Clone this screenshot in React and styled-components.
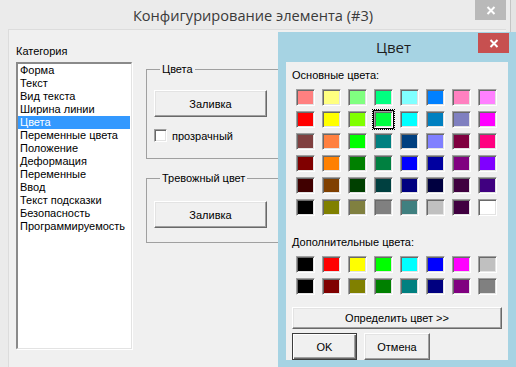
import React from 'react';
import styled, { createGlobalStyle } from 'styled-components';

const Global = createGlobalStyle`
  html, body { margin: 0; padding: 0; }
  body {
    width: 516px; height: 367px; overflow: hidden;
    background: #ebebeb;
    font-family: "Liberation Sans", Arial, sans-serif;
    font-size: 11px; color: #000;
  }
  * { box-sizing: border-box; }
`;

const Desktop = styled.div`
  position: relative;
  width: 516px;
  height: 367px;
  overflow: hidden;
  background: #e4e4e4;
`;

const MainWindow = styled.div`
  position: absolute;
  left: 0;
  top: 0;
  width: 511px;
  height: 380px;
  background: #ebebeb;
  border-right: 1px solid #c4c4c4;
  display: flex;
  flex-direction: column;
`;

const TitleBar = styled.div`
  height: ${p => p.$h}px;
  flex: none;
  display: grid;
  grid-template-columns: 1fr auto 1fr;
  align-items: start;
  padding-right: ${p => p.$pr}px;
`;

const TitleText = styled.div`
  grid-column: 2;
  align-self: center;
  font-family: "Open Sans", "Noto Sans", sans-serif;
  font-size: ${p => p.$size}px;
  color: ${p => p.$color};
  white-space: nowrap;
  margin-top: ${p => p.$mt || 0}px;
`;

const CloseBtn = styled.div`
  grid-column: 3;
  justify-self: end;
  width: 31px;
  height: 20px;
  background: ${p => p.$bg};
  display: flex;
  align-items: center;
  justify-content: center;
  margin-top: ${p => p.$mt || 0}px;
`;

const Panel = styled.div`
  flex: 1;
  margin: 0 4px 0 8px;
  background: #f0f0f0;
  border-top: 1px solid #dcdcdc;
  border-left: 1px solid #dcdcdc;
  display: flex;
  gap: 14px;
  padding: 15px 0 0 7px;
`;

const LeftCol = styled.div`
  width: 116px;
  display: flex;
  flex-direction: column;
`;

const Label = styled.div`
  height: 13px;
  line-height: 13px;
  white-space: nowrap;
  margin-bottom: ${p => p.$mb || 0}px;
  margin-top: ${p => p.$mt || 0}px;
`;

const ListBox = styled.div`
  width: 116px;
  height: 287px;
  background: #fff;
  border-top: 2px solid #8a8a8a;
  border-left: 2px solid #8a8a8a;
  border-right: 1px solid #e3e3e3;
  border-bottom: 1px solid #e3e3e3;
  box-shadow: 1px 1px 0 #fff;
  display: flex;
  flex-direction: column;
`;

const ListItem = styled.div`
  height: 13px;
  line-height: 13px;
  padding-left: 2px;
  margin-right: 1px;
  white-space: nowrap;
  background: ${p => (p.$sel ? '#3399ff' : 'transparent')};
  color: ${p => (p.$sel ? '#fff' : '#000')};
`;

const RightCol = styled.div`
  display: flex;
  flex-direction: column;
  gap: 13px;
  padding-top: 18px;
`;

const Group = styled.fieldset`
  margin: 0;
  width: 166px;
  border: 1px solid #a0a0a0;
  padding: 0 7px ${p => p.$pb}px 7px;
  display: flex;
  flex-direction: column;
  align-items: flex-start;
`;

const Legend = styled.legend`
  margin-left: 6px;
  padding: 0 2px;
  height: 13px;
  line-height: 13px;
  font-size: 11px;
`;

const Button = styled.div`
  width: ${p => p.$w}px;
  height: ${p => p.$h}px;
  margin-top: ${p => p.$mt || 0}px;
  background: #f0f0f0;
  border-top: 1px solid ${p => (p.$def ? '#3c3c3c' : '#fff')};
  border-left: 1px solid ${p => (p.$def ? '#3c3c3c' : '#fff')};
  border-right: 1px solid ${p => (p.$def ? '#3c3c3c' : '#696969')};
  border-bottom: 1px solid ${p => (p.$def ? '#3c3c3c' : '#696969')};
  box-shadow: ${p =>
    p.$def
      ? 'inset 1px 1px 0 #fff, inset -1px -1px 0 #696969, inset -2px -2px 0 #a0a0a0'
      : 'inset -1px -1px 0 #a0a0a0, inset 1px 1px 0 #e3e3e3'};
  display: flex;
  align-items: center;
  justify-content: center;
  white-space: nowrap;
  flex: none;
`;

const CheckRow = styled.div`
  margin-top: 12px;
  height: 13px;
  display: flex;
  align-items: center;
  gap: 5px;
`;

const CheckBox = styled.div`
  width: 13px;
  height: 13px;
  background: #fff;
  border-top: 1px solid #a0a0a0;
  border-left: 1px solid #a0a0a0;
  border-right: 1px solid #fff;
  border-bottom: 1px solid #fff;
  box-shadow: inset 1px 1px 0 #696969, inset -1px -1px 0 #e3e3e3;
`;

const Dialog = styled.div`
  position: absolute;
  left: 278px;
  top: 32px;
  width: 240px;
  height: 340px;
  background: #a6d3e3;
  display: flex;
  flex-direction: column;
`;

const Client = styled.div`
  margin: 0 10px 0 8px;
  height: 298px;
  background: #f0f0f0;
  overflow: hidden;
  padding: 7px 6px 0 6px;
  display: flex;
  flex-direction: column;
`;

const Grid = styled.div`
  display: grid;
  grid-template-columns: repeat(8, 19px);
  column-gap: 7px;
  row-gap: 5px;
  margin: ${p => p.$mt}px 0 0 4px;
`;

const Swatch = styled.div`
  width: 19px;
  height: 17px;
  background: ${p => p.$c};
  border-top: 1px solid #a0a0a0;
  border-left: 1px solid #a0a0a0;
  border-right: 1px solid #fff;
  border-bottom: 1px solid #fff;
  box-shadow: inset 1px 1px 0 #696969, inset -1px -1px 0 #e3e3e3
    ${p => (p.$sel ? ', 0 0 0 1px #000' : '')};
  outline: ${p => (p.$sel ? '1px dotted #000' : 'none')};
  outline-offset: 1px;
`;

const ButtonRow = styled.div`
  display: flex;
  gap: 7px;
  margin-top: 4px;
`;

const XIcon = ({ color = '#fff' }) => (
  <svg width="10" height="9" viewBox="0 0 10 9">
    <path d="M1.5 1 L8.5 8 M8.5 1 L1.5 8" stroke={color} strokeWidth="2" fill="none" />
  </svg>
);

const categories = [
  'Форма', 'Текст', 'Вид текста', 'Ширина линии', 'Цвета', 'Переменные цвета',
  'Положение', 'Деформация', 'Переменные', 'Ввод', 'Текст подсказки',
  'Безопасность', 'Программируемость',
];

const basic = [
  ['#FF8080', '#FFFF80', '#80FF80', '#00FF80', '#80FFFF', '#0080FF', '#FF80C0', '#FF80FF'],
  ['#FF0000', '#FFFF00', '#80FF00', '#00FF40', '#00FFFF', '#0080C0', '#8080C0', '#FF00FF'],
  ['#804040', '#FF8040', '#00FF00', '#008080', '#004080', '#8080FF', '#800040', '#FF0080'],
  ['#800000', '#FF8000', '#008000', '#008040', '#0000FF', '#0000A0', '#800080', '#8000FF'],
  ['#400000', '#804000', '#004000', '#004040', '#000080', '#000040', '#400040', '#400080'],
  ['#000000', '#808000', '#808040', '#808080', '#408080', '#C0C0C0', '#400040', '#FFFFFF'],
];

const custom = [
  ['#000000', '#FF0000', '#FFFF00', '#00FF00', '#00FFFF', '#0000FF', '#FF00FF', '#C0C0C0'],
  ['#000000', '#800000', '#808000', '#008000', '#008080', '#000080', '#800080', '#808080'],
];

export default function App() {
  return (
    <>
      <Global />
      <Desktop>
        <MainWindow>
          <TitleBar $h={29} $pr={4}>
            <TitleText $size={14.6} $color="#3a3a3a" $mt={1}>
              Конфигурирование элемента (#3)
            </TitleText>
            <CloseBtn $bg="#b9b9b9">
              <XIcon />
            </CloseBtn>
          </TitleBar>
          <Panel>
            <LeftCol>
              <Label $mb={4}>Категория</Label>
              <ListBox>
                {categories.map((c, i) => (
                  <ListItem key={c} $sel={i === 4}>{c}</ListItem>
                ))}
              </ListBox>
            </LeftCol>
            <RightCol>
              <Group $pb={16}>
                <Legend>Цвета</Legend>
                <Button $w={113} $h={27} $mt={14}>Заливка</Button>
                <CheckRow>
                  <CheckBox />
                  <span>прозрачный</span>
                </CheckRow>
              </Group>
              <Group $pb={14}>
                <Legend>Тревожный цвет</Legend>
                <Button $w={113} $h={27} $mt={16}>Заливка</Button>
              </Group>
            </RightCol>
          </Panel>
        </MainWindow>

        <Dialog>
          <TitleBar $h={30} $pr={9}>
            <TitleText $size={15} $color="#1e1e1e">Цвет</TitleText>
            <CloseBtn $bg="#c75050" $mt={1}>
              <XIcon />
            </CloseBtn>
          </TitleBar>
          <Client>
            <Label>Основные цвета:</Label>
            <Grid $mt={7}>
              {basic.flat().map((c, i) => (
                <Swatch key={i} $c={c} $sel={i === 11} />
              ))}
            </Grid>
            <Label $mt={20}>Дополнительные цвета:</Label>
            <Grid $mt={7}>
              {custom.flat().map((c, i) => (
                <Swatch key={i} $c={c} />
              ))}
            </Grid>
            <Button $w={210} $h={22} $mt={12}>Определить цвет &gt;&gt;</Button>
            <ButtonRow>
              <Button $w={65} $h={27} $def>OK</Button>
              <Button $w={66} $h={27}>Отмена</Button>
            </ButtonRow>
          </Client>
        </Dialog>
      </Desktop>
    </>
  );
}
